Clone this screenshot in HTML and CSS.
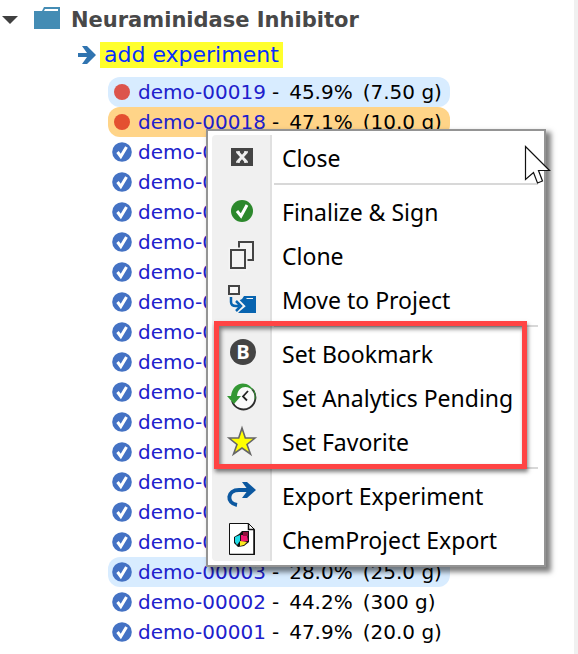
FILE: index.html
```html
<!DOCTYPE html>
<html lang="en">
<head>
<meta charset="utf-8">
<title>Neuraminidase Inhibitor</title>
<link rel="stylesheet" href="styles.css">
</head>
<body>
<svg class="defs" aria-hidden="true">
  <symbol id="done" viewBox="0 0 20 20"><circle cx="10" cy="10" r="9.8" fill="#4472c4"/><path d="M5.500 10l3.300 4.500L14.500 5" fill="none" stroke="#fff" stroke-width="3"/></symbol>
  <symbol id="open" viewBox="0 0 20 20"><circle cx="10" cy="10" r="8" fill="currentColor"/></symbol>
</svg>
<main class="panel">
  <header class="project">
    <svg class="caret" viewBox="0 0 16 8"><path d="M0 0h16L8 8z" fill="#404040"/></svg>
    <svg class="folder" viewBox="0 0 28 24"><path d="M1 5h8l2-4h16v22H1z" fill="#448cb4"/><path d="M11 5h14V3H12z" fill="#fff"/></svg>
    <h1>Neuraminidase Inhibitor</h1>
  </header>
  <div class="add">
    <svg class="arrow" viewBox="0 0 18 20"><path d="M0 8h9L4 1h5l9 9-9 9H4l5-7H0z" fill="#3074b0"/></svg>
    <a href="#add">add experiment</a>
  </div>
  <div class="tree">
    <ul class="experiments">
      <li class="marked pending"><svg><use href="#open"/></svg><a href="#19">demo-00019</a><span class="amount"><span>-</span> <span>45.9%</span> <span>(7.50 g)</span></span></li>
      <li class="selected"><svg><use href="#open"/></svg><a href="#18">demo-00018</a><span class="amount"><span>-</span> <span>47.1%</span> <span>(10.0 g)</span></span></li>
      <li><svg><use href="#done"/></svg><a href="#17">demo-00017</a></li>
      <li><svg><use href="#done"/></svg><a href="#16">demo-00016</a></li>
      <li><svg><use href="#done"/></svg><a href="#15">demo-00015</a></li>
      <li><svg><use href="#done"/></svg><a href="#14">demo-00014</a></li>
      <li><svg><use href="#done"/></svg><a href="#13">demo-00013</a></li>
      <li><svg><use href="#done"/></svg><a href="#12">demo-00012</a></li>
      <li><svg><use href="#done"/></svg><a href="#11">demo-00011</a></li>
      <li><svg><use href="#done"/></svg><a href="#10">demo-00010</a></li>
      <li><svg><use href="#done"/></svg><a href="#9">demo-00009</a></li>
      <li><svg><use href="#done"/></svg><a href="#8">demo-00008</a></li>
      <li><svg><use href="#done"/></svg><a href="#7">demo-00007</a></li>
      <li><svg><use href="#done"/></svg><a href="#6">demo-00006</a></li>
      <li><svg><use href="#done"/></svg><a href="#5">demo-00005</a></li>
      <li><svg><use href="#done"/></svg><a href="#4">demo-00004</a></li>
      <li class="marked"><svg><use href="#done"/></svg><a href="#3">demo-00003</a><span class="amount"><span>-</span> <span>28.0%</span> <span>(25.0 g)</span></span></li>
      <li><svg><use href="#done"/></svg><a href="#2">demo-00002</a><span class="amount"><span>-</span> <span>44.2%</span> <span>(300 g)</span></span></li>
      <li><svg><use href="#done"/></svg><a href="#1">demo-00001</a><span class="amount"><span>-</span> <span>47.9%</span> <span>(20.0 g)</span></span></li>
    </ul>
    <div class="menu" role="menu">
      <button role="menuitem"><svg viewBox="0 0 32 32"><path d="M5 7h22v18H5z" fill="#444"/><path d="M11.500 11l9 10M20.500 11l-9 10" stroke="#eee" stroke-width="3"/><path d="M10 11h4M18 11h4M10 21h4M18 21h4" stroke="#eee" stroke-width="1.500"/></svg><span>Close</span></button>
      <hr>
      <button role="menuitem"><svg viewBox="0 0 32 32"><circle cx="16" cy="16" r="11" fill="#2c882c"/><path d="M11 16l4 5 6-11" fill="none" stroke="#fff" stroke-width="3"/></svg><span>Finalize &amp; Sign</span></button>
      <button role="menuitem"><svg viewBox="0 0 32 32"><g fill="#f4f4f4" stroke="#444" stroke-width="2"><path d="M13 3h14v18H13z"/><path d="M5 11h14v18H5z" stroke="#f4f4f4" stroke-width="5"/><path d="M5 11h14v18H5z"/></g></svg><span>Clone</span></button>
      <button role="menuitem"><svg viewBox="0 0 32 32"><path d="M3 3h10v8H3z" fill="#f8f8f8" stroke="#444" stroke-width="2"/><path d="M12 18l4-2 2-3h12v17H12l5-7z" fill="#0864b0"/><path d="M20 16h7v-1h-6z" fill="#f4f4f4"/><path d="M10 17l6 6-6 5" fill="none" stroke="#f4f4f4" stroke-width="5"/><path d="M5 14v5q0 4 5 4h3M10 18l5 5-5 5" fill="none" stroke="#0864b0" stroke-width="2.500"/></svg><span>Move to Project</span></button>
      <hr>
      <div class="callout" role="group" aria-label="Flags">
        <button role="menuitem"><svg viewBox="0 0 32 32"><circle cx="17" cy="15" r="13" fill="#444"/><text class="letter" x="17" y="22" text-anchor="middle">B</text></svg><span>Set Bookmark</span></button>
        <button role="menuitem"><svg viewBox="0 0 32 32"><circle cx="17" cy="15.500" r="12" fill="#fafafa"/><path d="M6 20a12 12 0 1 0 20-12" fill="none" stroke="#2c2c2c" stroke-width="1.800"/><path d="M1 15h4C7-1 24-1 28 11 22 3 12 5 11 15h4l-7 8z" fill="#349834"/><path d="M28 9.500q2 5 1 9" fill="none" stroke="#349834"/><path d="M22 10l-5 5.500 4 4" fill="none" stroke="#222" stroke-width="1.800"/></svg><span>Set Analytics Pending</span></button>
        <button role="menuitem"><svg viewBox="0 0 32 32"><path d="M16 3l3.300 10H29l-8 6.500L24.500 29 16 23l-8.500 6L11 19.500 3 13h9.700z" fill="#ff0" stroke="#666" stroke-width="1.600"/></svg><span>Set Favorite</span></button>
      </div>
      <hr>
      <button role="menuitem"><svg viewBox="0 0 32 32"><path d="M11 26C0 24 1 11 13 11h12" fill="none" stroke="#0c58a0" stroke-width="4"/><path d="M16 3h5l9 8-9 8h-5l6-8z" fill="#0c58a0"/></svg><span>Export Experiment</span></button>
      <button role="menuitem"><svg viewBox="0 0 32 32"><path d="M3.500.5h19l6 6v25h-25z" fill="#fff" stroke="#111"/><path d="M22.500.5v6h6M28 7v24.500H4" fill="none" stroke="#111" stroke-width="1.500"/><path d="M8 14l5-3 3-3h7v11l-5 4-6 1-4-4z" fill="#111"/><path d="M9 14l5-2v6l-3 4-2-3z" fill="#20dce8"/><path d="M15 12h6l1 6-7 1z" fill="#f01870"/><path d="M17 9h5v4h-5z" fill="#90103c"/><path d="M14 18l7 1-3 3-4 1z" fill="#fce820"/></svg><span>ChemProject Export</span></button>
      <svg class="cursor" viewBox="0 0 28 42"><path d="M1.500 1.500v33l8-7 4 10.500 5-2-4-10.500h11z" fill="#fff" stroke="#111" stroke-width="1.200"/></svg>
    </div>
  </div>
</main>
</body>
</html>
```
FILE: styles.css
```css
* { box-sizing: border-box; }
body {
  margin: 0;
  font: 20px/30px Verdana, "DejaVu Sans", sans-serif;
  color: #000;
  background: #fff;
}
.defs { position: absolute; width: 0; height: 0; }
.panel { min-height: 100vh; border-right: 4px solid #f0f0f0; }
.project { display: flex; align-items: center; height: 40px; padding-left: 2px; }
.caret { width: 16px; height: 8px; margin-right: 15px; }
.folder { width: 28px; height: 24px; margin: 0 10px 4px 0; }
h1 { margin: 0; font-size: 21px; color: #484848; white-space: nowrap; }
.add { display: flex; align-items: center; gap: 4px; height: 30px; padding-left: 78px; }
.arrow { width: 18px; height: 20px; }
.add a {
  padding: 0 4px;
  font-size: 22px;
  line-height: 26px;
  color: #0830ff;
  background: #ffff2c;
  text-decoration: none;
  white-space: nowrap;
}
.tree { position: relative; padding: 7px 0 6px 108px; }
.experiments { margin: 0; padding: 0; list-style: none; }
.experiments li {
  display: flex;
  align-items: center;
  gap: 6px;
  width: fit-content;
  height: 30px;
  padding: 0 8px 0 4px;
  border-radius: 12px;
  white-space: nowrap;
}
.experiments svg { width: 20px; height: 20px; color: #e45030; }
.experiments .pending svg { color: #dc544c; }
.experiments .marked { background: #d8ecff; }
.experiments .selected { background: #ffd488; }
.experiments a { color: #2020cc; text-decoration: none; }
.amount { display: flex; gap: 10px; }
.menu {
  position: absolute;
  left: 206px;
  top: 59px;
  width: 340px;
  padding: 4px 6px 4px 4px;
  border: 2px solid #949494;
  background: #fff;
  box-shadow: 4px 4px 5px 1px rgba(0, 0, 0, .5);
}
.menu::before {
  content: "";
  position: absolute;
  left: 4px;
  top: 4px;
  bottom: 4px;
  width: 58px;
  border-right: 2px solid #e0e0e0;
  border-radius: 4px 0 0 4px;
  background: #f0f0f0;
}
.menu button {
  position: relative;
  display: flex;
  align-items: center;
  gap: 12px;
  width: 100%;
  height: 44px;
  padding: 0 0 0 14px;
  border: 0;
  background: none;
  color: #000;
  font: 23px/28px "Segoe UI", "Noto Sans", sans-serif;
  white-space: nowrap;
}
.menu button svg { flex: none; width: 32px; height: 32px; margin-right: 12px; }
.menu button span { padding-top: 2px; }
.menu hr { height: 2px; margin: 4px 0 4px 62px; border: 0; background: #d8d8d8; }
.letter { font: bold 20px "Open Sans", sans-serif; fill: #fff; }
.callout { position: relative; }
.callout::after {
  content: "";
  position: absolute;
  inset: -10px 11px -6px 2px;
  border: 5px solid #ff4444;
  box-shadow: 1px 3px 4px rgba(0, 0, 0, .5), inset 2px 3px 4px rgba(0, 0, 0, .5);
  pointer-events: none;
}
.cursor { position: absolute; right: -8px; top: 14px; width: 28px; height: 42px; pointer-events: none; }
```
